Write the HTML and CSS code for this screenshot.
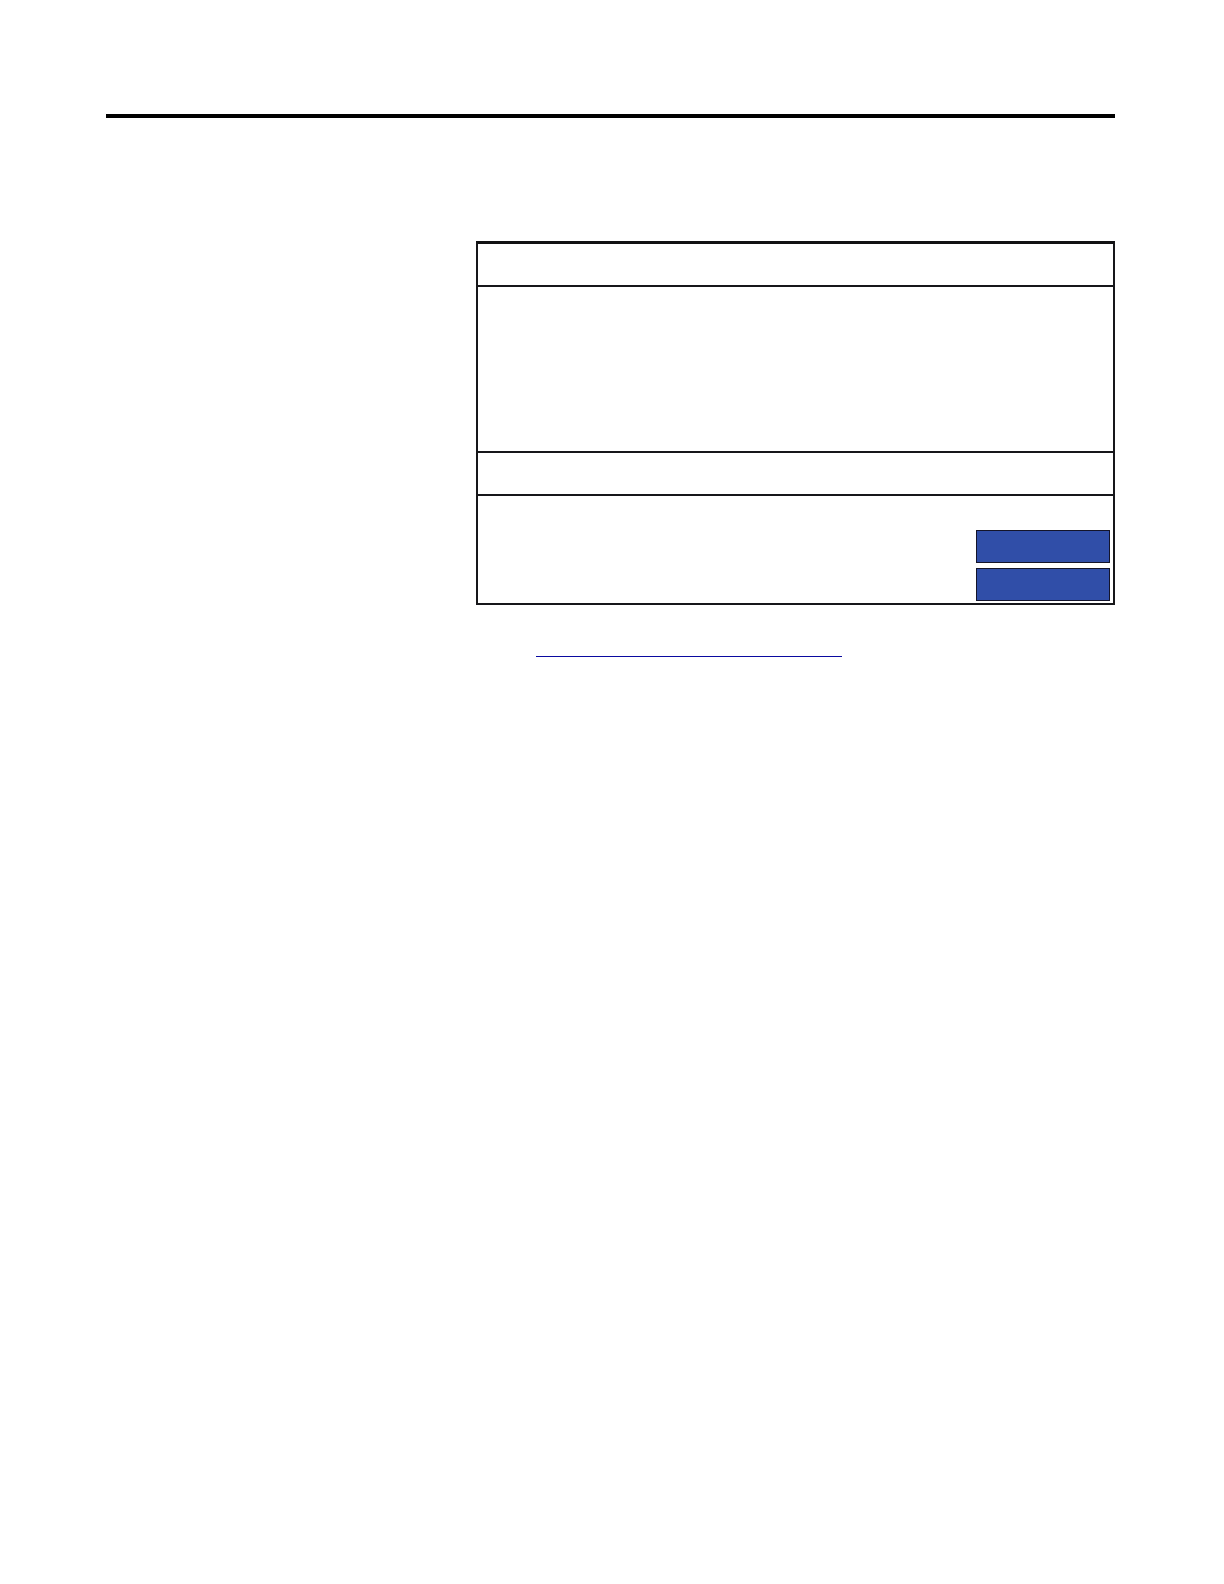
FILE: index.html
```html
<!doctype html>
<html lang="en">
<head>
    <meta charset="UTF-8">
    <meta name="viewport" content="width=device-width, initial-scale=1.0">
    <title>Document</title>
    <link rel="stylesheet" href="styles.css">
</head>
<body>
<header class="page-rule"></header>
<main class="content">
    <div class="panel">
        <div class="panel-head"></div>
        <div class="panel-body"></div>
        <div class="panel-head"></div>
        <div class="panel-foot">
            <div class="block"></div>
            <div class="block"></div>
        </div>
    </div>
    <div class="link-line"></div>
</main>
</body>
</html>
```

FILE: styles.css
```css
* {
    box-sizing: border-box;
}
body {
    margin: 0;
    padding: 114px 109px 0 106px;
    background: #fff;
    font-family: "Liberation Sans", Arial, sans-serif;
}
.page-rule {
    height: 4px;
    background: #000;
}
.content {
    margin-top: 123px;
    padding-left: 370px;
}
/* bordered panel with two heading rows */
.panel {
    border: 2px solid #17171a;
    border-top: 3px solid #111113;
}
.panel-head,
.panel-body {
    border-bottom: 2px solid #17171a;
}
.panel-head {
    height: 43px;
}
.panel-body {
    min-height: 166px;
}
.panel-foot {
    display: flex;
    flex-direction: column;
    align-items: flex-end;
    gap: 5px;
    padding: 34px 3px 2px;
}
.block {
    width: 134px;
    height: 33px;
    background: #304ea8;
    border: 1px solid #14142a;
}
.link-line {
    width: 306px;
    margin: 51px 0 0 60px;
    border-bottom: 1px solid #0a0aa0;
}
```
